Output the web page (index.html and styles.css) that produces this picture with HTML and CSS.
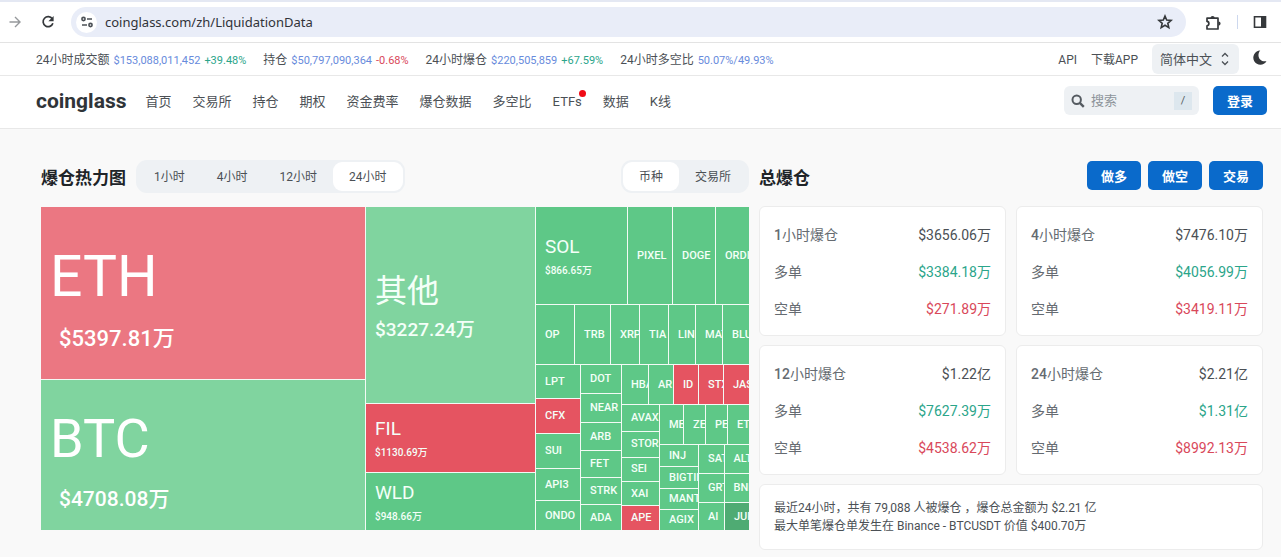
FILE: index.html
```html
<!DOCTYPE html>
<html lang="zh-CN">
<head>
<meta charset="utf-8">
<meta name="viewport" content="width=device-width, initial-scale=1">
<title>爆仓数据 - coinglass</title>
<link rel="stylesheet" href="styles.css">
</head>
<body>
<div class="browser">
  <button class="icon-btn muted" aria-label="前进"><svg width="14" height="14" viewBox="0 0 14 14" fill="none" stroke="currentColor" stroke-width="1.4"><path d="M1.500 7h10M7 2l5 5-5 5"/></svg></button>
  <button class="icon-btn" aria-label="刷新"><svg width="14" height="14" viewBox="0 0 14 14"><path d="M11.300 3.900A5 5 0 1 0 11.900 8.200" fill="none" stroke="currentColor" stroke-width="1.700"/><path d="M12.600 1v5.200H7.400z" fill="currentColor"/></svg></button>
  <div class="address">
    <button class="site-info" aria-label="网站信息"><svg width="14" height="14" viewBox="0 0 14 14" fill="none" stroke="currentColor" stroke-width="1.600"><circle cx="3.500" cy="4" r="1.600"/><path d="M7 4h5M2 10h5"/><circle cx="10.500" cy="10" r="1.600"/></svg></button>
    <input class="url" aria-label="网址" value="coinglass.com/zh/LiquidationData">
    <button class="icon-btn" aria-label="收藏"><svg width="16" height="16" viewBox="0 0 16 16" fill="none" stroke="currentColor" stroke-width="1.600"><path d="M8 2l1.700 4 4.400.4-3.300 2.900 1 4.300L8 11.300l-3.800 2.300 1-4.300-3.300-2.900L6.300 6z"/></svg></button>
  </div>
  <div class="browser-tools">
    <button class="icon-btn" aria-label="扩展程序"><svg width="17" height="17" viewBox="0 0 17 17"><path d="M2 4.200h11v10.800H2v-3.200c2.500-.2 2.500-4.200 0-4.400z" fill="none" stroke="currentColor" stroke-width="1.700" stroke-linejoin="round"/><path d="M5.500 4a2.100 2.100 0 0 1 4.200 0zM13.500 7.500a2.100 2.100 0 0 1 0 4.200z" fill="currentColor"/></svg></button>
    <span class="divider"></span>
    <button class="icon-btn" aria-label="侧边栏"><svg width="14" height="14" viewBox="0 0 14 14"><path d="M1.500 1.800h11v10.400h-11z" fill="none" stroke="currentColor" stroke-width="1.600"/><path d="M8 1h5v12H8z" fill="currentColor"/></svg></button>
  </div>
</div>

<div class="ticker">
  <div class="stat">24小时成交额 <a href="#">$153,088,011,452</a> <span class="up">+39.48%</span></div>
  <div class="stat">持仓 <a href="#">$50,797,090,364</a> <span class="down">-0.68%</span></div>
  <div class="stat">24小时爆仓 <a href="#">$220,505,859</a> <span class="up">+67.59%</span></div>
  <div class="stat">24小时多空比 <a href="#">50.07%/49.93%</a></div>
  <div class="ticker-right">
    <div class="ticker-links"><a href="#">API</a><a href="#">下载APP</a></div>
    <label class="lang">
      <select aria-label="语言"><option>简体中文</option></select>
      <svg width="8" height="14" viewBox="0 0 8 14" fill="none" stroke="currentColor" stroke-width="1.300"><path d="M1 4.500l3-3 3 3M1 9.500l3 3 3-3"/></svg>
    </label>
    <button class="icon-btn moon" aria-label="深色模式"><svg width="14" height="15" viewBox="0 0 14 15"><path d="M7.200.5A7.100 7.100 0 1 0 13.500 11.200C6.500 12.400 3.200 5.400 7.200.5z" fill="currentColor"/></svg></button>
  </div>
</div>

<header class="nav">
  <a class="logo" href="#">coinglass</a>
  <nav class="links">
    <a href="#">首页</a><a href="#">交易所</a><a href="#">持仓</a><a href="#">期权</a><a href="#">资金费率</a><a href="#">爆仓数据</a><a href="#">多空比</a><a class="hot" href="#">ETFs</a><a href="#">数据</a><a href="#">K线</a>
  </nav>
  <label class="search">
    <svg width="14" height="14" viewBox="0 0 14 14" fill="none" stroke="currentColor" stroke-width="2"><circle cx="5.700" cy="5.700" r="4.200"/><path d="M8.800 8.800l4 4" stroke-width="2.400"/></svg>
    <input type="search" aria-label="搜索" placeholder="搜索">
    <kbd>/</kbd>
  </label>
  <button class="primary">登录</button>
</header>

<main class="page">
  <section>
    <div class="head">
      <h2>爆仓热力图</h2>
      <div class="segmented">
        <button>1小时</button><button>4小时</button><button>12小时</button><button class="active">24小时</button>
      </div>
      <div class="segmented push">
        <button class="active">币种</button><button>交易所</button>
      </div>
    </div>
    <div class="treemap">
      <div class="col" style="flex-grow:324">
        <div class="cell huge soft-red" style="flex-grow:172"><b>ETH</b><i>$5397.81万</i></div>
        <div class="cell huge second soft-green" style="flex-grow:150"><b>BTC</b><i>$4708.08万</i></div>
      </div>
      <div class="col" style="flex-grow:169">
        <div class="cell large soft-green" style="flex-grow:196"><b>其他</b><i>$3227.24万</i></div>
        <div class="cell medium red" style="flex-grow:68"><b>FIL</b><i>$1130.69万</i></div>
        <div class="cell medium" style="flex-grow:57"><b>WLD</b><i>$948.66万</i></div>
      </div>
      <div class="col" style="flex-grow:213">
        <div class="row" style="flex-grow:97">
          <div class="cell medium" style="flex-grow:91"><b>SOL</b><i>$866.65万</i></div>
          <div class="cell" style="flex-grow:44">PIXEL</div>
          <div class="cell" style="flex-grow:42">DOGE</div>
          <div class="cell" style="flex-grow:33">ORDI</div>
        </div>
        <div class="row" style="flex-grow:59">
          <div class="cell" style="flex-grow:38">OP</div>
          <div class="cell" style="flex-grow:35">TRB</div>
          <div class="cell" style="flex-grow:28">XRP</div>
          <div class="cell" style="flex-grow:28">TIA</div>
          <div class="cell" style="flex-grow:26">LINK</div>
          <div class="cell" style="flex-grow:26">MATIC</div>
          <div class="cell" style="flex-grow:26">BLUR</div>
        </div>
        <div class="row" style="flex-grow:165">
          <div class="col" style="flex-grow:44">
            <div class="cell" style="flex-grow:33">LPT</div>
            <div class="cell red" style="flex-grow:34">CFX</div>
            <div class="cell" style="flex-grow:34">SUI</div>
            <div class="cell" style="flex-grow:31">API3</div>
            <div class="cell" style="flex-grow:29">ONDO</div>
          </div>
          <div class="col" style="flex-grow:40">
            <div class="cell" style="flex-grow:28">DOT</div>
            <div class="cell" style="flex-grow:28">NEAR</div>
            <div class="cell" style="flex-grow:27">ARB</div>
            <div class="cell" style="flex-grow:26">FET</div>
            <div class="cell" style="flex-grow:26">STRK</div>
            <div class="cell" style="flex-grow:25">ADA</div>
          </div>
          <div class="col" style="flex-grow:127">
            <div class="row" style="flex-grow:39">
              <div class="cell" style="flex-grow:26">HBAR</div>
              <div class="cell" style="flex-grow:24">AR</div>
              <div class="cell red" style="flex-grow:24">ID</div>
              <div class="cell red" style="flex-grow:24">STX</div>
              <div class="cell red" style="flex-grow:25">JASMY</div>
            </div>
            <div class="row" style="flex-grow:125">
              <div class="col" style="flex-grow:37">
                <div class="cell" style="flex-grow:26">AVAX</div>
                <div class="cell" style="flex-grow:25">STORJ</div>
                <div class="cell" style="flex-grow:24">SEI</div>
                <div class="cell" style="flex-grow:23">XAI</div>
                <div class="cell red" style="flex-grow:24">APE</div>
              </div>
              <div class="col" style="flex-grow:89">
                <div class="row" style="flex-grow:39">
                  <div class="cell" style="flex-grow:23">MEME</div>
                  <div class="cell" style="flex-grow:21">ZETA</div>
                  <div class="cell" style="flex-grow:21">PEPE</div>
                  <div class="cell" style="flex-grow:21">ETC</div>
                </div>
                <div class="row" style="flex-grow:85">
                  <div class="col" style="flex-grow:38">
                    <div class="cell" style="flex-grow:21">INJ</div>
                    <div class="cell" style="flex-grow:21">BIGTIME</div>
                    <div class="cell" style="flex-grow:20">MANTA</div>
                    <div class="cell" style="flex-grow:20">AGIX</div>
                  </div>
                  <div class="col" style="flex-grow:50">
                    <div class="row" style="flex-grow:28">
                      <div class="cell" style="flex-grow:25">SATS</div>
                      <div class="cell" style="flex-grow:25">ALT</div>
                    </div>
                    <div class="row" style="flex-grow:28">
                      <div class="cell" style="flex-grow:25">GRT</div>
                      <div class="cell" style="flex-grow:25">BNB</div>
                    </div>
                    <div class="row" style="flex-grow:27">
                      <div class="cell" style="flex-grow:25">AI</div>
                      <div class="cell dark" style="flex-grow:24">JUP</div>
                    </div>
                  </div>
                </div>
              </div>
            </div>
          </div>
        </div>
      </div>
    </div>
  </section>

  <section>
    <div class="head">
      <h2>总爆仓</h2>
      <div class="actions">
        <button class="primary">做多</button><button class="primary">做空</button><button class="primary">交易</button>
      </div>
    </div>
    <div class="cards">
      <dl class="card">
        <div><dt><strong>1</strong>小时爆仓</dt><dd>$3656.06万</dd></div>
        <div><dt>多单</dt><dd class="up">$3384.18万</dd></div>
        <div><dt>空单</dt><dd class="down">$271.89万</dd></div>
      </dl>
      <dl class="card">
        <div><dt><strong>4</strong>小时爆仓</dt><dd>$7476.10万</dd></div>
        <div><dt>多单</dt><dd class="up">$4056.99万</dd></div>
        <div><dt>空单</dt><dd class="down">$3419.11万</dd></div>
      </dl>
      <dl class="card">
        <div><dt><strong>12</strong>小时爆仓</dt><dd>$1.22亿</dd></div>
        <div><dt>多单</dt><dd class="up">$7627.39万</dd></div>
        <div><dt>空单</dt><dd class="down">$4538.62万</dd></div>
      </dl>
      <dl class="card">
        <div><dt><strong>24</strong>小时爆仓</dt><dd>$2.21亿</dd></div>
        <div><dt>多单</dt><dd class="up">$1.31亿</dd></div>
        <div><dt>空单</dt><dd class="down">$8992.13万</dd></div>
      </dl>
      <p class="card summary">最近24小时，共有 79,088 人被爆仓 ，爆仓总金额为 $2.21 亿<br>最大单笔爆仓单发生在 Binance - BTCUSDT 价值 $400.70万</p>
    </div>
  </section>
</main>
</body>
</html>
```

FILE: styles.css
```css
* { box-sizing: border-box; }

body {
  margin: 0;
  background: #f9f9f9;
  color: #4b5055;
  font-family: Roboto, "Noto Sans CJK SC", sans-serif;
  font-size: 13px;
}

a { color: inherit; text-decoration: none; }
button, input, select { font: inherit; color: inherit; border: 0; background: none; padding: 0; margin: 0; outline: 0; }
button { cursor: pointer; white-space: nowrap; }
h2, dl, dd, p { margin: 0; }
svg { display: block; flex: none; }

.up { color: #2ba58a; }
.down { color: #d9485a; }

/* Browser toolbar */
.browser {
  display: flex;
  align-items: center;
  height: 43px;
  padding: 0 14px 0 8px;
  gap: 19px;
  background: #fff;
  border-top: 2px solid #e4e8f3;
  border-bottom: 1px solid #e3e3e3;
}
.icon-btn { color: #35383b; }
.icon-btn.muted { color: #96999c; }
.address {
  flex: 1;
  display: flex;
  align-items: center;
  height: 30px;
  margin-left: -3px;
  padding: 0 13px 0 5px;
  border-radius: 15px;
  background: #e9edf8;
}
.site-info {
  display: grid;
  place-items: center;
  width: 21px;
  height: 21px;
  border-radius: 50%;
  background: #fff;
}
.url { flex: 1; min-width: 0; margin-left: 8px; color: #303338; font-family: "Noto Sans", sans-serif; font-size: 13px; }
.browser-tools { display: flex; align-items: center; gap: 15px; }
.divider { width: 1px; height: 14px; background: #cdd8ee; }

/* Market ticker */
.ticker {
  display: flex;
  align-items: center;
  gap: 17px;
  height: 33px;
  padding: 0 14px 0 36px;
  background: #fff;
  border-bottom: 1px solid #e8e8e8;
  font-size: 12px;
  white-space: nowrap;
}
.stat, .ticker-links { display: flex; align-items: baseline; gap: 4px; padding-bottom: 2px; }
.stat a, .stat span { font-size: 11px; }
.stat a { color: #688bdc; }
.ticker-right { display: flex; align-items: center; gap: 14px; margin-left: auto; }
.ticker-links { gap: 14px; }
.lang {
  display: flex;
  align-items: center;
  height: 30px;
  padding: 0 10px 0 8px;
  border-radius: 6px;
  background: #eef1f4;
  font-size: 13px;
}
.lang select { appearance: none; width: 61px; }
.moon { padding-bottom: 3px; }

/* Main navigation */
.nav {
  display: flex;
  align-items: center;
  height: 53px;
  padding: 0 14px 3px 36px;
  background: #fff;
  border-bottom: 1px solid #e8e8e8;
  white-space: nowrap;
}
.logo { color: #2f3438; font-size: 21px; font-weight: 700; }
.links { display: flex; align-items: baseline; gap: 21px; margin-left: 19px; }
.hot { position: relative; }
.hot::after {
  content: "";
  position: absolute;
  top: -4px;
  right: -4px;
  width: 7px;
  height: 7px;
  border-radius: 50%;
  background: #f00b16;
}
.search {
  display: flex;
  align-items: center;
  gap: 6px;
  width: 135px;
  height: 29px;
  margin: 0 14px 0 auto;
  padding: 0 7px;
  border-radius: 6px;
  background: #eef1f4;
  color: #555b61;
}
.search input { flex: 1; min-width: 0; }
.search input::placeholder { color: #8d949a; opacity: 1; }
.search kbd {
  width: 18px;
  font: inherit;
  font-size: 11px;
  line-height: 18px;
  text-align: center;
  background: #dde7ee;
}
.primary {
  height: 29px;
  padding: 0 14px;
  border-radius: 5px;
  background: #0a6acb;
  color: #fff;
  font-weight: 700;
}

/* Page */
.page {
  display: grid;
  grid-template-columns: minmax(0, 708fr) minmax(0, 504fr);
  gap: 10px;
  padding: 31px 18px 6px 41px;
}
.head { display: flex; align-items: center; height: 33px; white-space: nowrap; }
.head h2 { color: #202428; font-size: 17px; font-weight: 700; }
.actions { display: flex; gap: 7px; margin-left: auto; padding-bottom: 3px; }
.segmented {
  display: flex;
  height: 33px;
  margin-left: 10px;
  padding: 2px;
  border-radius: 11px;
  background: #eef1f4;
  font-size: 12px;
}
.segmented.push { margin-left: auto; }
.segmented button { padding: 0 16px 2px; border-radius: 9px; }
.segmented .active { background: #fff; }

/* Heat map */
.treemap {
  display: flex;
  gap: 1px;
  margin-top: 14px;
  aspect-ratio: 708 / 323;
  background: #f3faf5;
}
.row, .col { display: flex; gap: 1px; flex-basis: 0; min-width: 0; min-height: 0; }
.col { flex-direction: column; }
.cell {
  display: flex;
  flex-direction: column;
  justify-content: center;
  flex-basis: 0;
  min-width: 0;
  min-height: 0;
  overflow: hidden;
  background: #5ec887;
  color: #f4fff8;
  font-size: 11px;
  font-weight: 500;
  line-height: 14px;
  text-indent: 9px;
  white-space: nowrap;
}
.cell b { font-weight: 400; }
.cell i { font-style: normal; }
.red { background: #e55461; }
.soft-red { background: #eb7782; }
.soft-green { background: #80d49f; }
.dark { background: #4fab73; }
.medium b { font-size: 19px; line-height: 30px; }
.medium i { font-size: 10px; line-height: 18px; }
.large b { font-size: 32px; line-height: 50px; }
.large i { font-size: 19px; line-height: 28px; }
.huge { color: #fff; }
.huge b { font-size: 57px; line-height: 92px; }
.huge i { font-size: 22px; line-height: 32px; text-indent: 18px; }
.huge.second b { font-size: 54px; line-height: 88px; }
.huge.second i { font-size: 21px; }

/* Liquidation totals */
.cards {
  display: grid;
  grid-template-columns: 1fr 1fr;
  gap: 9px 10px;
  margin-top: 13px;
}
.card {
  padding: 10px 14px 7px;
  border: 1px solid #ececec;
  border-radius: 6px;
  background: #fff;
}
.card div { display: flex; justify-content: space-between; font-size: 14px; line-height: 37px; }
.card dt { color: #656b71; }
.card strong { font-weight: 500; }
.summary { grid-column: 1 / -1; padding: 14px; font-size: 12px; line-height: 18px; }
```
